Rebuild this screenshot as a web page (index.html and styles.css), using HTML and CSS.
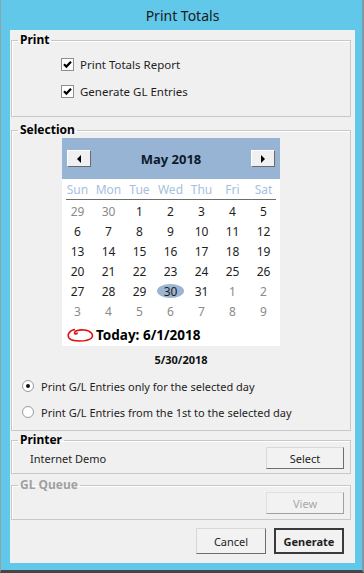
FILE: index.html
```html
<!DOCTYPE html>
<html lang="en">

<head>
  <meta charset="UTF-8">
  <title>Print Totals</title>
  <link rel="stylesheet" href="styles.css">
</head>

<body>

  <div class="window">
    <div class="titlebar">Print Totals</div>

    <div class="client">
      <!-- Print options -->
      <fieldset class="group group-print">
        <legend>Print</legend>
        <label class="check">
          <span class="box"><svg width="11" height="11" viewBox="0 0 11 11"><path d="M2 5.2 L4.4 7.6 L9 2.8" fill="none" stroke="#000" stroke-width="2.2"/></svg></span>
          Print Totals Report
        </label>
        <label class="check">
          <span class="box"><svg width="11" height="11" viewBox="0 0 11 11"><path d="M2 5.2 L4.4 7.6 L9 2.8" fill="none" stroke="#000" stroke-width="2.2"/></svg></span>
          Generate GL Entries
        </label>
      </fieldset>

      <!-- Date selection -->
      <fieldset class="group group-selection">
        <legend>Selection</legend>
        <div class="calendar">
          <div class="cal-head">
            <span class="nav"><svg width="6" height="8" viewBox="0 0 6 8"><path d="M5 0 L1 4 L5 8 Z" fill="#000"/></svg></span>
            <span class="month">May 2018</span>
            <span class="nav"><svg width="6" height="8" viewBox="0 0 6 8"><path d="M1 0 L5 4 L1 8 Z" fill="#000"/></svg></span>
          </div>
          <div class="cal-days">
            <span>Sun</span><span>Mon</span><span>Tue</span><span>Wed</span><span>Thu</span><span>Fri</span><span>Sat</span>
          </div>
          <div class="cal-rule"></div>
          <div class="cal-grid">
            <span class="other">29</span><span class="other">30</span><span>1</span><span>2</span><span>3</span><span>4</span><span>5</span>
            <span>6</span><span>7</span><span>8</span><span>9</span><span>10</span><span>11</span><span>12</span>
            <span>13</span><span>14</span><span>15</span><span>16</span><span>17</span><span>18</span><span>19</span>
            <span>20</span><span>21</span><span>22</span><span>23</span><span>24</span><span>25</span><span>26</span>
            <span>27</span><span>28</span><span>29</span><span class="selected">30</span><span>31</span><span class="other">1</span><span class="other">2</span>
            <span class="other">3</span><span class="other">4</span><span class="other">5</span><span class="other">6</span><span class="other">7</span><span class="other">8</span><span class="other">9</span>
          </div>
          <div class="cal-today">
            <svg width="28" height="16" viewBox="0 0 28 16"><path d="M9 2.5 C3 3.5 1 8 3 11 C6 15 21 15 25.5 11 C28 8 25 3.5 18 3 C13 2.6 8.5 3.6 8.5 6 C8.5 7.5 11 7.2 11.5 5.5" fill="none" stroke="#e01010" stroke-width="1.6"/></svg>
            Today: 6/1/2018
          </div>
        </div>

        <div class="selected-date">5/30/2018</div>

        <label class="radio"><span class="dot checked"></span>Print G/L Entries only for the selected day</label>
        <label class="radio"><span class="dot"></span>Print G/L Entries from the 1st to the selected day</label>
      </fieldset>

      <!-- Printer -->
      <fieldset class="group group-printer">
        <legend>Printer</legend>
        <div class="row">
          <span class="printer-name">Internet Demo</span>
          <button>Select</button>
        </div>
      </fieldset>

      <!-- GL Queue (disabled) -->
      <fieldset class="group group-queue">
        <legend>GL Queue</legend>
        <div class="row">
          <span></span>
          <button disabled>View</button>
        </div>
      </fieldset>

      <div class="actions">
        <button class="btn-wide">Cancel</button>
        <button class="btn-wide default">Generate</button>
      </div>
    </div>
  </div>

</body>

</html>
```

FILE: styles.css
```css
body {
  margin: 0;
  font-family: "Noto Sans", "Open Sans", sans-serif;
  font-size: 11px;
  color: #1e1e1e;
}

.window {
  width: 364px;
  height: 573px;
  box-sizing: border-box;
  background: #62c8ea;
  border-left: 1px solid #8aa3ad;
  border-right: 2px solid #7f9aa5;
  border-bottom: 3px solid #454545;
  padding: 0 7px 7px 9px;
  display: flex;
  flex-direction: column;
}

.titlebar {
  height: 30px;
  display: flex;
  align-items: center;
  justify-content: center;
  font-size: 14px;
  color: #1a1a1a;
}

.client {
  flex: 1;
  background: #f0f0f0;
  padding: 0 4px 0 1px;
  display: flex;
  flex-direction: column;
}

/* group boxes */
.group {
  margin: 0;
  padding: 0;
  min-width: 0;
  box-sizing: border-box;
  border: 1px solid #c8c8c8;
  box-shadow: inset 1px 1px 0 #fff;
}

.group legend {
  margin-left: 6px;
  padding: 0 2px;
  font-size: 12px;
  font-weight: bold;
  line-height: 14px;
  color: #000;
}

.group-print {
  margin-top: 3px;
  height: 84px;
}

.group-selection {
  margin-top: 6px;
  height: 308px;
}

.group-printer {
  margin-top: 2px;
  height: 41px;
}

.group-queue {
  margin-top: 4px;
  height: 42px;
}

.group-queue legend {
  color: #a0a0a0;
}

/* checkboxes */
.check {
  display: flex;
  align-items: center;
  height: 18px;
  gap: 6px;
  margin-top: 9px;
  padding-left: 49px;
  font-size: 11.5px;
}

.check:first-of-type {
  margin-top: 8px;
}

.box {
  width: 13px;
  height: 13px;
  box-sizing: border-box;
  border: 1px solid #8e8e8e;
  background: #fff;
  display: flex;
  align-items: center;
  justify-content: center;
}

/* calendar */
.calendar {
  width: 218px;
  margin: 1px 0 0 50px;
  background: #fff;
  padding-bottom: 2px;
}

.cal-head {
  height: 41px;
  background: #98b4d4;
  display: flex;
  align-items: center;
  justify-content: space-between;
  padding: 0 5px;
}

.nav {
  width: 24px;
  height: 17px;
  box-sizing: border-box;
  background: #f0f0f0;
  border: 1px solid;
  border-color: #fff #6a6a6a #6a6a6a #fff;
  display: flex;
  align-items: center;
  justify-content: center;
}

.month {
  font-size: 13px;
  font-weight: bold;
  color: #0c1a2c;
}

.cal-days,
.cal-grid {
  display: grid;
  grid-template-columns: repeat(7, 31px);
  font-size: 12px;
}

.cal-days {
  height: 20px;
  align-items: center;
  color: #a6bfdf;
}

.cal-rule {
  height: 1px;
  margin: 0 4px;
  background: #6d6d6d;
}

.cal-days span {
  text-align: center;
}

.cal-grid {
  margin-top: 1px;
  grid-auto-rows: 20px;
}

.cal-grid span {
  display: flex;
  align-items: center;
  justify-content: center;
}

.cal-grid .other {
  color: #8a8a8a;
}

.cal-grid .selected {
  background: #9cb5d2;
  border-radius: 50%;
  margin: 3px 2px;
}

.cal-today {
  display: flex;
  align-items: center;
  height: 18px;
  margin: 5px 0 0 4px;
  gap: 2px;
  font-size: 13.5px;
  font-weight: bold;
  color: #000;
}

.selected-date {
  margin-top: 6px;
  text-align: center;
  line-height: 16px;
  font-weight: bold;
  color: #111;
}

/* radios */
.radio {
  display: flex;
  align-items: center;
  height: 18px;
  gap: 7px;
  padding-left: 10px;
  margin-top: 8px;
}

.selected-date + .radio {
  margin-top: 9px;
}

.dot {
  width: 12px;
  height: 12px;
  box-sizing: border-box;
  border: 1px solid #9a9a9a;
  border-radius: 50%;
  background: #fff;
  display: flex;
  align-items: center;
  justify-content: center;
}

.dot.checked::after {
  content: "";
  width: 4px;
  height: 4px;
  border-radius: 50%;
  background: #111;
}

/* printer / queue rows */
.row {
  display: flex;
  align-items: center;
  justify-content: space-between;
  padding: 0 6px 0 18px;
}

button {
  font-family: inherit;
  font-size: 11px;
  color: #1e1e1e;
  width: 78px;
  height: 22px;
  padding: 0;
  background: #f2f2f2;
  border: 1px solid;
  border-color: #d8d8d8 #6e6e6e #6e6e6e #d8d8d8;
}

button:disabled {
  color: #a8a8a8;
  border-color: #e0e0e0 #a0a0a0 #a0a0a0 #e0e0e0;
}

.actions {
  display: flex;
  justify-content: flex-end;
  gap: 8px;
  margin-top: 8px;
  padding-right: 7px;
}

.btn-wide {
  width: 70px;
  height: 26px;
}

.default {
  font-weight: bold;
  border: 2px solid #3a3a3a;
}
```
